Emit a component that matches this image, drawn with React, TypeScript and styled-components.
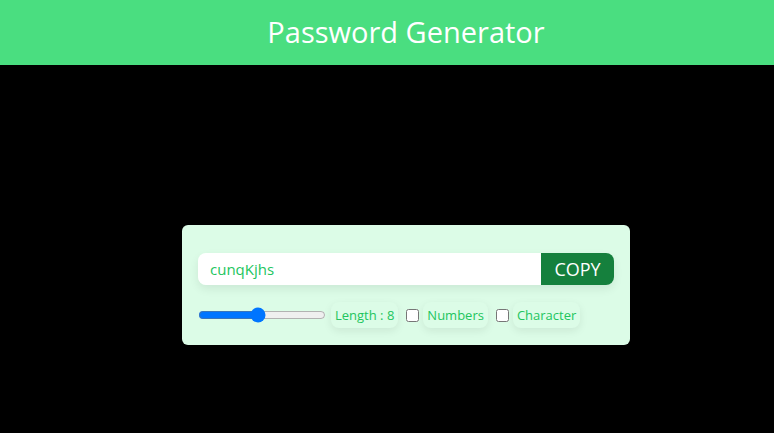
import { useState } from "react";
import styled, { createGlobalStyle } from "styled-components";

const GlobalStyle = createGlobalStyle`
  html, body {
    margin: 0;
    padding: 0;
    background: #000;
    font-family: "Open Sans", "Noto Sans", sans-serif;
  }
`;

export default function App() {
  const [length, setLength] = useState(8);
  const [numbers, setNumbers] = useState(false);
  const [chars, setChars] = useState(false);

  return (
    <>
      <GlobalStyle />
      <Header>
        <Title>Password Generator</Title>
      </Header>
      <Main>
        <Card>
          <InputRow>
            <PasswordInput value="cunqKjhs" readOnly />
            <CopyButton>COPY</CopyButton>
          </InputRow>
          <Options>
            <Range
              type="range"
              min={1}
              max={16}
              value={length}
              onChange={(e) => setLength(Number(e.target.value))}
            />
            <Tag>Length : {length}</Tag>
            <Check
              type="checkbox"
              checked={numbers}
              onChange={() => setNumbers(!numbers)}
            />
            <Tag>Numbers</Tag>
            <Check
              type="checkbox"
              checked={chars}
              onChange={() => setChars(!chars)}
            />
            <Tag>Character</Tag>
          </Options>
        </Card>
      </Main>
    </>
  );
}

const Header = styled.header`
  height: 65px;
  display: flex;
  align-items: center;
  justify-content: center;
  padding-left: 38px;

  background-color: #4ade80;
`;

const Title = styled.h1`
  margin: 0 0 2px;

  font-size: 29px;
  font-weight: 400;
  color: #fff;
`;

const Main = styled.main`
  display: flex;
  justify-content: center;
  padding-top: 160px;
  padding-left: 38px;
`;

const Card = styled.div`
  box-sizing: border-box;
  width: 448px;
  height: 120px;
  padding: 28px 16px 16px;

  background-color: #dcfce7;
  border-radius: 6px;
`;

const InputRow = styled.div`
  display: flex;
  height: 32px;

  border-radius: 8px;
  box-shadow: 0 4px 10px rgba(0, 0, 0, 0.08);
`;

const PasswordInput = styled.input`
  flex: 1;
  min-width: 0;
  padding: 0 12px;

  font-family: inherit;
  font-size: 15px;
  color: #22c55e;

  background-color: #fff;
  border: none;
  border-radius: 8px 0 0 8px;
  outline: none;
`;

const CopyButton = styled.button`
  width: 73px;
  padding: 0;

  font-family: inherit;
  font-size: 18px;
  color: #fff;

  background-color: #15803d;
  border: none;
  border-radius: 0 8px 8px 0;
  cursor: pointer;
`;

const Options = styled.div`
  display: flex;
  align-items: center;
  margin-top: 17px;
`;

const Range = styled.input`
  width: 128px;
  margin: 0 5px 0 0;
`;

const Check = styled.input`
  width: 13px;
  height: 13px;
  margin: 0 4px 0 8px;
`;

const Tag = styled.span`
  padding: 4px 4px;

  font-size: 13px;
  color: #22c55e;

  background-color: #dcfce7;
  border-radius: 8px;
  box-shadow: 0 3px 8px rgba(0, 0, 0, 0.08);
`;
